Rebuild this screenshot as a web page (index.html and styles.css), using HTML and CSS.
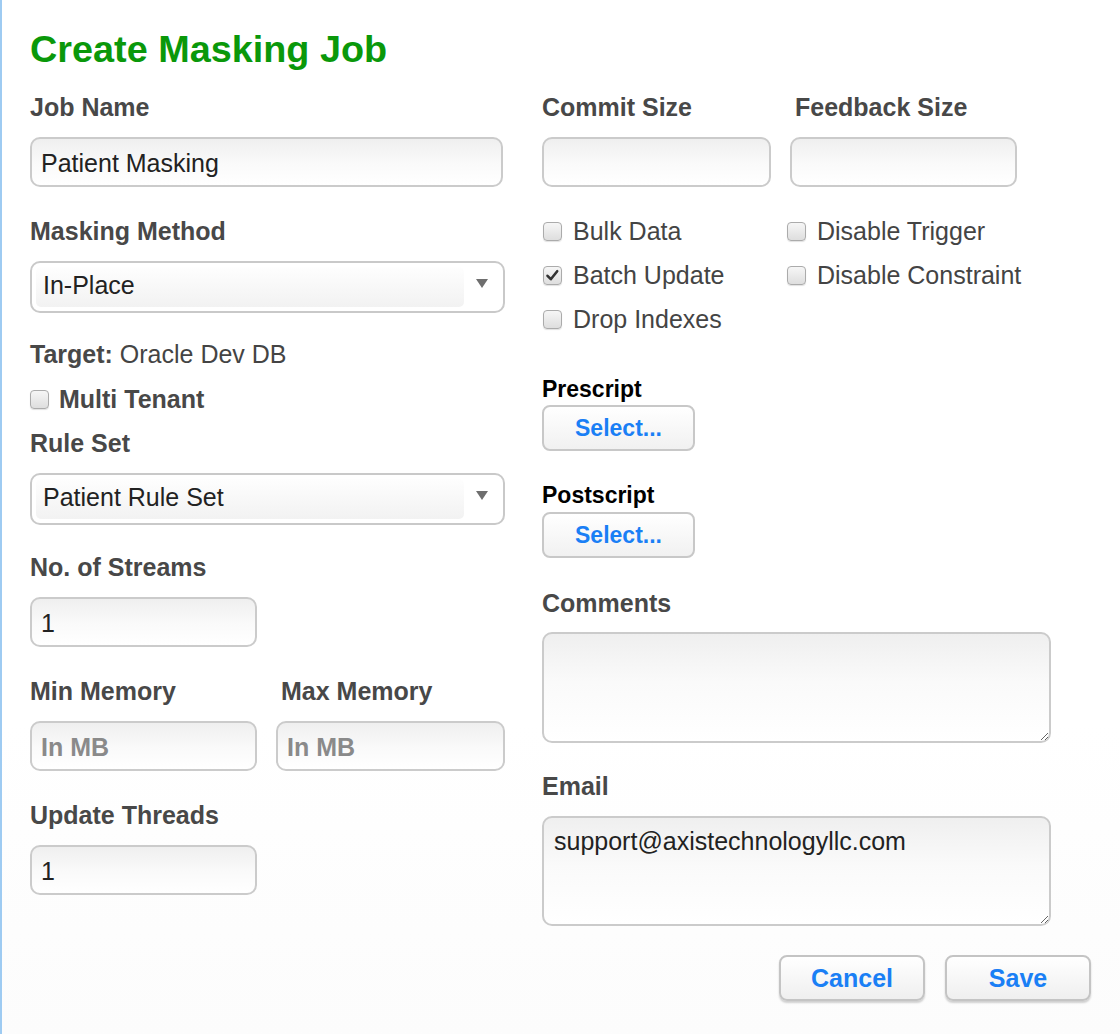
FILE: index.html
```html
<!DOCTYPE html>
<html>
<head>
<meta charset="utf-8">
<link rel="stylesheet" href="styles.css">
</head>
<body>
<div class="dialog">
  <h1 class="title">Create Masking Job</h1>
  <div class="columns">
    <div class="col-left">
      <div class="group">
        <label class="label">Job Name</label>
        <input class="input input-wide" type="text" value="Patient Masking">
      </div>
      <div class="group g-30">
        <label class="label">Masking Method</label>
        <div class="select">
          <div class="select-inner">In-Place</div>
          <span class="select-arrow"></span>
        </div>
      </div>
      <div class="target"><b>Target:</b> Oracle Dev DB</div>
      <div class="check-line bold-check">
        <span class="checkbox"></span>
        <span>Multi Tenant</span>
      </div>
      <div class="group g-15">
        <label class="label">Rule Set</label>
        <div class="select">
          <div class="select-inner">Patient Rule Set</div>
          <span class="select-arrow"></span>
        </div>
      </div>
      <div class="group g-28">
        <label class="label">No. of Streams</label>
        <input class="input input-small" type="text" value="1">
      </div>
      <div class="pair g-30">
        <div class="pair-item w-min">
          <label class="label">Min Memory</label>
          <input class="input" type="text" placeholder="In MB">
        </div>
        <div class="pair-item w-max">
          <label class="label label-shift">Max Memory</label>
          <input class="input" type="text" placeholder="In MB">
        </div>
      </div>
      <div class="group g-30">
        <label class="label">Update Threads</label>
        <input class="input input-small" type="text" value="1">
      </div>
    </div>

    <div class="col-right">
      <div class="pair pair-top">
        <div class="pair-item w-commit">
          <label class="label">Commit Size</label>
          <input class="input" type="text">
        </div>
        <div class="pair-item w-feedback">
          <label class="label label-shift">Feedback Size</label>
          <input class="input" type="text">
        </div>
      </div>
      <div class="checks">
        <div class="check-line"><span class="checkbox"></span><span>Bulk Data</span></div>
        <div class="check-line"><span class="checkbox"></span><span>Disable Trigger</span></div>
        <div class="check-line"><span class="checkbox checked"><svg viewBox="0 0 19 19" width="19" height="19"><path d="M4.5 9.8 L7.8 13.2 L14.2 5.2" fill="none" stroke="#333" stroke-width="2.6" stroke-linecap="round" stroke-linejoin="round"/></svg></span><span>Batch Update</span></div>
        <div class="check-line"><span class="checkbox"></span><span>Disable Constraint</span></div>
        <div class="check-line"><span class="checkbox"></span><span>Drop Indexes</span></div>
      </div>
      <div class="script-label s-pre">Prescript</div>
      <button class="btn btn-select">Select...</button>
      <div class="script-label s-post">Postscript</div>
      <button class="btn btn-select btn-select-2">Select...</button>
      <div class="group g-31">
        <label class="label">Comments</label>
        <textarea class="textarea ta-comments"></textarea>
      </div>
      <div class="group g-29">
        <label class="label">Email</label>
        <textarea class="textarea ta-email">support@axistechnologyllc.com</textarea>
      </div>
      <div class="actions">
        <button class="btn btn-action">Cancel</button>
        <button class="btn btn-action">Save</button>
      </div>
    </div>
  </div>
</div>
</body>
</html>
```

FILE: styles.css
```css
* {
  box-sizing: border-box;
}

html, body {
  margin: 0;
  padding: 0;
  background: #ffffff;
}

body {
  font-family: "Liberation Sans", Arial, Helvetica, sans-serif;
  color: #444;
}

.dialog {
  height: 1034px;
  border-left: 2px solid #9ecbf2;
  padding: 27px 0 0 28px;
  background: linear-gradient(#ffffff, #ffffff 70%, #fcfcfc);
}

.title {
  margin: 0;
  font-size: 37.8px;
  line-height: 44px;
  font-weight: bold;
  color: #0a980a;
}

.columns {
  display: flex;
  gap: 37px;
  margin-top: 22px;
}

.col-left {
  width: 475px;
  display: flex;
  flex-direction: column;
}

.col-right {
  width: 549px;
  display: flex;
  flex-direction: column;
}

.group {
  display: flex;
  flex-direction: column;
}

.g-15 { margin-top: 15px; }
.g-28 { margin-top: 28px; }
.g-29 { margin-top: 29px; }
.g-30 { margin-top: 30px; }
.g-31 { margin-top: 31px; }

.label {
  display: block;
  font-size: 25px;
  line-height: 29px;
  font-weight: bold;
  color: #484848;
}

.label-shift {
  padding-left: 5px;
}

.input {
  display: block;
  height: 50px;
  margin-top: 15px;
  border: 2px solid #cbcbcb;
  border-radius: 10px;
  background: linear-gradient(#efefef, #fafafa 55%, #ffffff);
  font-family: "Liberation Sans", Arial, Helvetica, sans-serif;
  font-size: 25px;
  color: #222;
  padding: 3px 9px 0 9px;
  outline: none;
}

.input::placeholder {
  color: #8a8a8a;
  font-weight: bold;
}

.input-wide {
  width: 473px;
}

.input-small {
  width: 227px;
}

.select {
  margin-top: 15px;
  height: 52px;
  width: 475px;
  border: 2px solid #c9c9c9;
  border-radius: 10px;
  background: #ffffff;
  display: flex;
  padding: 4px;
}

.select-inner {
  flex: 1;
  border-radius: 5px;
  background: linear-gradient(#fefefe, #f2f2f2);
  font-size: 25px;
  color: #222;
  display: flex;
  align-items: center;
  padding: 0 0 4px 7px;
}

.select-arrow {
  width: 35px;
  display: flex;
  justify-content: center;
  padding-top: 12px;
}

.select-arrow::before {
  content: "";
  width: 0;
  height: 0;
  border-left: 6px solid transparent;
  border-right: 6px solid transparent;
  border-top: 9px solid #6e6e6e;
}

.target {
  margin-top: 27px;
  font-size: 25px;
  line-height: 29px;
  color: #444;
}

.target b {
  color: #484848;
}

.check-line {
  display: flex;
  align-items: center;
  gap: 11px;
  font-size: 25px;
  line-height: 29px;
  color: #444;
  height: 29px;
}

.bold-check {
  margin-top: 16px;
  gap: 10px;
  font-weight: bold;
  color: #484848;
}

.checkbox {
  width: 19px;
  height: 19px;
  flex: none;
  border: 1px solid #ababab;
  border-radius: 4px;
  background: linear-gradient(#f6f6f6, #dedede);
  box-shadow: 0 1px 1px rgba(0, 0, 0, 0.12);
  display: flex;
  align-items: center;
  justify-content: center;
  overflow: hidden;
}

.checkbox svg {
  display: block;
  margin: -1px;
}

.pair {
  display: flex;
}

.pair-item {
  display: flex;
  flex-direction: column;
}

.w-min { width: 227px; }
.w-max { width: 229px; margin-left: 19px; }
.w-commit { width: 229px; }
.w-feedback { width: 227px; margin-left: 19px; }

.checks {
  margin-top: 30px;
  display: grid;
  grid-template-columns: 244px 1fr;
  row-gap: 15px;
}

.checks .check-line {
  padding-left: 1px;
}

.script-label {
  font-size: 23px;
  line-height: 26px;
  font-weight: bold;
  color: #000;
}

.s-pre { margin-top: 42px; }
.s-post { margin-top: 31px; }

.btn {
  font-family: "Liberation Sans", Arial, Helvetica, sans-serif;
  font-weight: bold;
  color: #1a7ff5;
  border: 2px solid #c8c8c8;
  border-radius: 8px;
  background: linear-gradient(#ffffff, #f1f1f1);
  cursor: pointer;
  padding: 0;
}

.btn-select {
  margin-top: 3px;
  width: 153px;
  height: 46px;
  font-size: 23px;
}

.btn-select-2 {
  margin-top: 4px;
}

.textarea {
  display: block;
  margin-top: 14px;
  width: 509px;
  border: 2px solid #cbcbcb;
  border-radius: 10px;
  background: linear-gradient(#efefef, #fafafa 45%, #ffffff);
  font-family: "Liberation Sans", Arial, Helvetica, sans-serif;
  font-size: 25px;
  line-height: 29px;
  color: #222;
  padding: 9px 10px;
  outline: none;
  resize: both;
}

.ta-comments { height: 111px; }
.ta-email { height: 110px; margin-top: 15px; }

.actions {
  margin-top: 29px;
  display: flex;
  justify-content: flex-end;
  gap: 20px;
}

.btn-action {
  width: 146px;
  height: 46px;
  font-size: 25px;
  border-color: #c4c4c4;
  background: linear-gradient(#ffffff, #efefef);
  box-shadow: 0 2px 2px rgba(0, 0, 0, 0.18);
}
```
